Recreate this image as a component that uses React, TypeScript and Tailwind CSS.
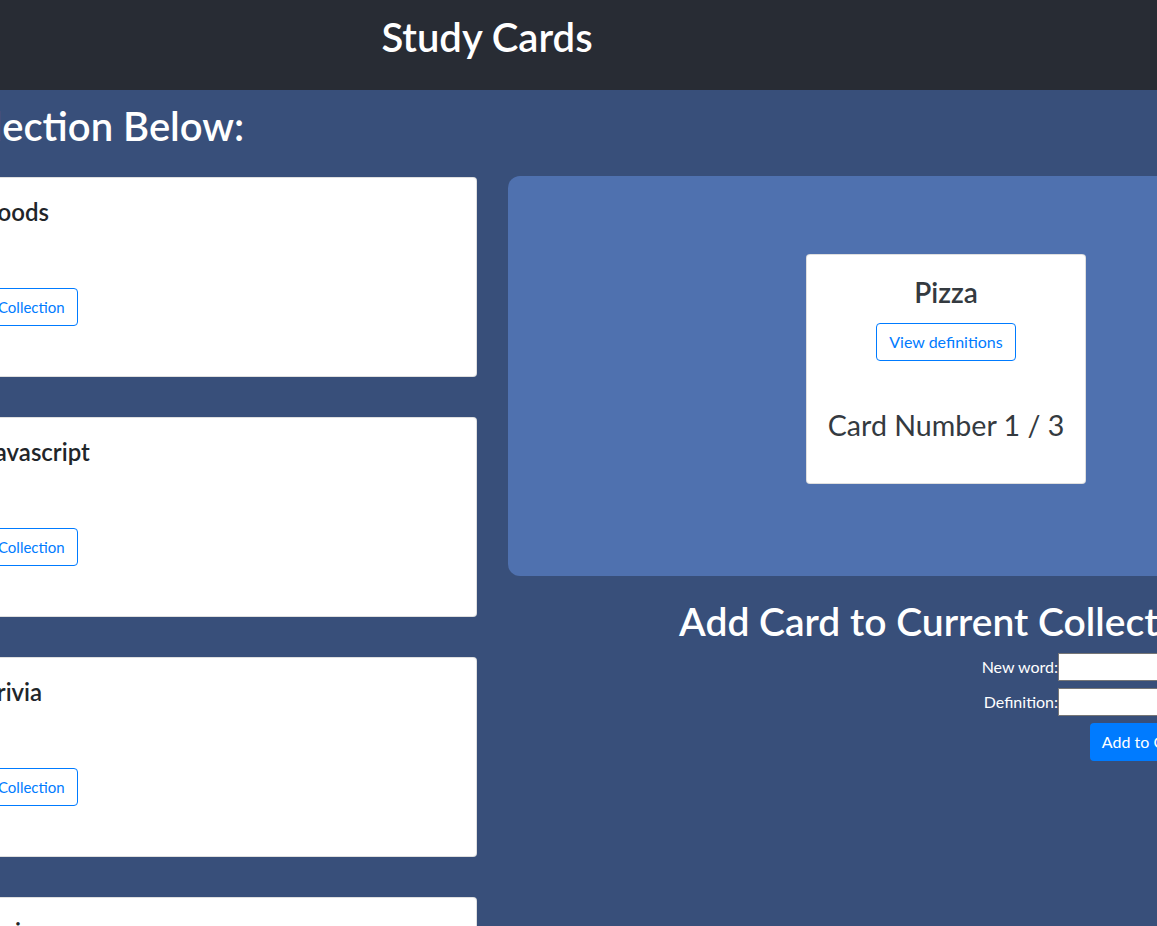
const collections = ['Foods', 'Javascript', 'Trivia', 'Anime'];

function CollectionCard({ name }: { name: string }) {
  return (
    <div className="h-[200px] shrink-0 rounded-[4px] border border-black/[0.125] bg-white px-[20px] pt-[20px]">
      <h4 className="text-[24px] leading-[28.8px] font-semibold text-[#212529]">{name}</h4>
      <button className="mt-[61px] h-[38px] rounded-[4px] border border-[#007bff] px-[12px] text-[15px] leading-[24px] text-[#007bff]">
        Collection
      </button>
    </div>
  );
}

export default function App() {
  return (
    <div className="h-[926px] w-[1157px] overflow-hidden bg-[#384f7a] font-['Lato',sans-serif]">
      <div className="-ml-[214px] w-[1402px]">
        <header className="h-[90px] bg-[#282c34] pt-[13px] text-center">
          <h1 className="text-[40px] leading-[48px] font-semibold text-white">Study Cards</h1>
        </header>

        <main>
          <h1 className="mt-[12px] text-[40px] leading-[48px] font-semibold text-white">
            Select a Collection Below:
          </h1>

          <div className="mt-[26px] flex gap-[31px] pl-[178px]">
            {/* collections list */}
            <div className="flex w-[513px] shrink-0 flex-col gap-[40px] pt-[1px]">
              {collections.map((c) => (
                <CollectionCard key={c} name={c} />
              ))}
            </div>

            {/* current card + add form */}
            <div className="w-[876px] shrink-0">
              <div className="flex h-[400px] justify-center rounded-[12px] bg-[#4f71af] pt-[78px]">
                <div className="h-[230px] w-[280px] rounded-[4px] border border-black/[0.125] bg-white pt-[21px] text-center">
                  <h3 className="text-[28px] leading-[33.6px] font-semibold text-[#343a40]">Pizza</h3>
                  <button className="mt-[13px] h-[38px] rounded-[4px] border border-[#007bff] px-[12px] text-[16px] leading-[24px] text-[#007bff]">
                    View definitions
                  </button>
                  <p className="mt-[48px] text-[28.6px] leading-[33.6px] text-[#343a40]">Card Number 1 / 3</p>
                </div>
              </div>

              <h1 className="mt-[21px] text-center text-[39px] leading-[48px] font-semibold text-white">
                Add Card to Current Collection
              </h1>
              <form className="mt-[8px] flex flex-col items-end gap-[7px] pr-[148px]">
                <label className="flex items-center text-[16px] leading-[24px] text-white">
                  New word:
                  <input type="text" className="h-[28px] w-[178px] border border-[#767676] bg-white" />
                </label>
                <label className="flex items-center text-[16px] leading-[24px] text-white">
                  Definition:
                  <input type="text" className="h-[28px] w-[178px] border border-[#767676] bg-white" />
                </label>
                <button
                  type="button"
                  className="h-[38px] rounded-[4px] bg-[#007bff] px-[11.5px] text-[16px] leading-[24px] text-white"
                >
                  Add to Collection
                </button>
              </form>
            </div>
          </div>
        </main>
      </div>
    </div>
  );
}
